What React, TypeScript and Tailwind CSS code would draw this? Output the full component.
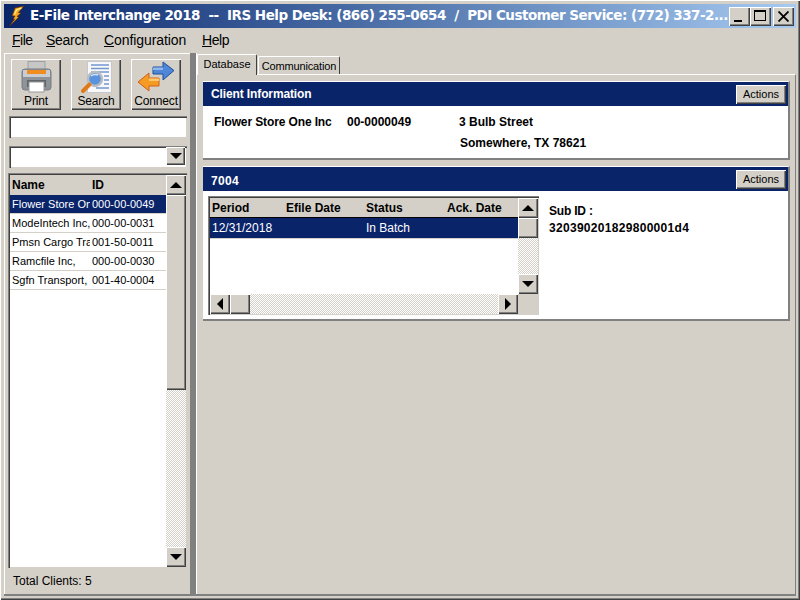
const raised = "bg-[#d4d0c8] shadow-[inset_1px_1px_0_#ffffff,inset_-1px_-1px_0_#404040,inset_-2px_-2px_0_#808080]";
const stipple = "bg-[repeating-conic-gradient(#d4d0c8_0_25%,#ffffff_0_50%)] bg-[length:2px_2px]";
const sunken = "shadow-[inset_1px_1px_0_#808080,inset_2px_2px_0_#404040,inset_-1px_-1px_0_#d4d0c8]";

function Arrow({ dir }: { dir: "up" | "down" | "left" | "right" }) {
  const pts = { up: "0,6 12,6 6,0", down: "0,0 12,0 6,6", left: "6,0 6,12 0,6", right: "0,0 0,12 6,6" }[dir];
  const v = dir === "up" || dir === "down";
  return (
    <svg width={v ? 12 : 6} height={v ? 6 : 12} viewBox={v ? "0 0 12 6" : "0 0 6 12"}>
      <polygon points={pts} fill="#000" />
    </svg>
  );
}

function SB({ dir, cls = "" }: { dir: "up" | "down" | "left" | "right"; cls?: string }) {
  return <div className={`${raised} flex shrink-0 items-center justify-center ${cls}`}><Arrow dir={dir} /></div>;
}

function PrintIcon() {
  return (
    <svg width="32" height="32" viewBox="0 0 32 32">
      <rect x="8" y="0.5" width="17" height="10" fill="#c6c6c6" stroke="#a0a0a0" />
      <path d="M2 11 Q2 8 5 8 H28 Q31 8 31 11 V26 Q31 29 28 29 H5 Q2 29 2 26Z" fill="#8d9399" stroke="#767c82" />
      <rect x="3" y="9" width="27" height="7" fill="#c9cdd1" />
      <rect x="7" y="9" width="19" height="4" fill="#f28c1e" />
      <rect x="7" y="19" width="19" height="7" fill="#5f656b" />
      <rect x="9" y="21" width="15" height="10" fill="#ffffff" stroke="#9a9a9a" />
    </svg>
  );
}

function SearchIcon() {
  return (
    <svg width="34" height="34" viewBox="0 0 34 34">
      <rect x="8.5" y="1.5" width="24" height="31" fill="#f8f8fa" stroke="#c8c8cc" />
      <path d="M12 5H30M12 8.5H30M12 12H30M25 16H30M25 20H30M25 24H30M17 28H30" stroke="#7398d0" strokeWidth="1.3" />
      <circle cx="16" cy="19" r="7" fill="#5b92dc" stroke="#b8bcc2" strokeWidth="2.5" />
      <path d="M12 16 Q15 13.5 19 15" stroke="#cfe2f8" strokeWidth="1.5" fill="none" />
      <path d="M10.5 24.5 L4 31" stroke="#e07a18" strokeWidth="4" strokeLinecap="round" />
    </svg>
  );
}

function ConnectIcon() {
  return (
    <svg width="38" height="32" viewBox="0 0 38 32">
      <path d="M16 6H26V1L37 9.5 26 19V13H16Z" fill="#4f86d8" stroke="#1f4f9c" />
      <path d="M16 6.5H26V9H16Z" fill="#8fb8ee" />
      <path d="M22 17H12V12L1 21 12 30V25H22Z" fill="#f59a22" stroke="#d0601a" />
      <path d="M22 17.5H12V20H22Z" fill="#fbc96c" />
    </svg>
  );
}

function Bolt() {
  return (
    <svg className="shrink-0" width="15" height="20" viewBox="0 0 15 20">
      <path d="M15 0 L6 2 L3 10 L6 10 L4 13 L5.5 13 L0.5 20 L10 11 L8 10.5 L12 7 L9.5 6.5 Z" fill="#f7a820" stroke="#5a2c06" strokeWidth="0.7" />
      <path d="M12.5 2 L7.5 4 L5.5 8.5" stroke="#fff09a" strokeWidth="1.2" fill="none" />
    </svg>
  );
}

function ToolBtn({ label, children }: { label: string; children: React.ReactNode }) {
  return (
    <div className={`${raised} flex h-[51px] w-[50px] flex-col items-center pt-[1px] text-[12px] leading-none`}>
      <div className="flex h-[34px] items-center justify-center">{children}</div>
      <div className="mt-[1px] tracking-[-0.15px]">{label}</div>
    </div>
  );
}

const clients = [
  ["Flower Store One Inc", "000-00-0049"],
  ["ModeIntech Inc,", "000-00-0031"],
  ["Pmsn Cargo Transport", "001-50-0011"],
  ["Ramcfile Inc,", "000-00-0030"],
  ["Sgfn Transport,", "001-40-0004"],
];

function Header({ title, titleCls = "mt-[4px] tracking-[-0.12px]" }: { title: string; titleCls?: string }) {
  return (
    <div className="flex h-[24px] shrink-0 items-start justify-between bg-[#0a246a] pl-[8px] pr-[2px]">
      <span className={`text-[12px] font-bold leading-[16px] text-white ${titleCls}`}>{title}</span>
      <div className={`${raised} mt-[3px] flex h-[19px] w-[50px] items-center justify-center text-[11px] text-black`}>Actions</div>
    </div>
  );
}

function Panel({ children, cls = "" }: { children: React.ReactNode; cls?: string }) {
  return <div className={`border-t border-r-2 border-b-2 border-t-white border-r-[#808080] border-b-[#808080] bg-white ${cls}`}>{children}</div>;
}

export default function App() {
  return (
    <div className="flex h-[600px] w-[800px] flex-col overflow-hidden bg-[#d4d0c8] font-['Liberation_Sans',Arial,sans-serif] text-black">
      <div className={`${raised} flex h-full flex-col p-[4px]`}>
        <div className="flex h-[24px] shrink-0 items-center justify-between bg-gradient-to-r from-[#0a246a] to-[#a6caf0] pl-[5px] pr-[2px]">
          <div className="flex min-w-0 items-center">
            <Bolt />
            <span className="ml-[6px] whitespace-pre font-['DejaVu_Sans',sans-serif] text-[13.5px] font-bold leading-none tracking-[-0.5px] text-white">
              E-File Interchange 2018{"  "}--{"  "}IRS Help Desk: (866) 255-0654{"  "}/{"  "}PDI Customer Service: (772) 337-2...
            </span>
          </div>
          <div className="flex shrink-0 items-center">
            <div className={`${raised} relative h-[19px] w-[21px]`}><div className="absolute bottom-[4px] left-[5px] h-[2px] w-[8px] bg-black" /></div>
            <div className={`${raised} relative h-[19px] w-[21px]`}><div className="absolute left-[4px] top-[3px] h-[11px] w-[12px] border border-t-2 border-black" /></div>
            <div className={`${raised} ml-[2px] flex h-[19px] w-[21px] items-center justify-center`}>
              <svg width="11" height="11" viewBox="0 0 11 11"><path d="M0.5 0.5L10.5 10.5M10.5 0.5L0.5 10.5" stroke="#000" strokeWidth="1.8" /></svg>
            </div>
          </div>
        </div>

        <div className="flex h-[25px] shrink-0 items-center pl-[8px] text-[14px]">
          <span className="w-[34px] tracking-[-0.5px]"><u>F</u>ile</span>
          <span className="w-[58px] tracking-[-0.3px]"><u>S</u>earch</span>
          <span className="w-[98px] tracking-[-0.08px]"><u>C</u>onfiguration</span>
          <span className="tracking-[-0.4px]"><u>H</u>elp</span>
        </div>

        <div className="flex min-h-0 flex-1 border-b-2 border-[#808080]">
          <div className="flex w-[186px] shrink-0 flex-col border-l border-t border-white pl-[3px] pr-[2px]">
            <div className="mt-[5px] flex gap-[10px] pl-[3px]">
              <ToolBtn label="Print"><PrintIcon /></ToolBtn>
              <ToolBtn label="Search"><SearchIcon /></ToolBtn>
              <ToolBtn label="Connect"><ConnectIcon /></ToolBtn>
            </div>
            <div className={`mt-[6px] ml-[1px] h-[22px] w-[178px] bg-white ${sunken}`} />
            <div className={`mt-[8px] ml-[1px] flex h-[22px] w-[178px] justify-end bg-white pb-[3px] pr-[2px] pt-[1px] ${sunken}`}>
              <SB dir="down" cls="w-[19px]" />
            </div>
            <div className={`mt-[5px] flex h-[395px] w-[179px] bg-white p-[2px] pb-[1px] pr-[1px] ${sunken}`}>
              <div className="min-w-0 flex-1">
                <div className="flex h-[20px] items-center bg-[#d4d0c8] pl-[2px] text-[12px] font-bold">
                  <span className="w-[80px]">Name</span><span>ID</span>
                </div>
                {clients.map(([n, id], i) => (
                  <div key={id} className={`flex h-[19px] items-center border-b border-[#d4d0c8] pl-[2px] text-[11px] ${i === 0 ? "bg-[#0a246a] text-white" : ""}`}>
                    <span className="w-[78px] overflow-hidden whitespace-nowrap">{n}</span>
                    <span className="ml-[2px]">{id}</span>
                  </div>
                ))}
              </div>
              <div className="flex w-[20px] flex-col">
                <SB dir="up" cls="h-[20px]" />
                <div className={`${raised} h-[195px] shrink-0`} />
                <div className={`${stipple} flex-1`} />
                <SB dir="down" cls="h-[20px]" />
              </div>
            </div>
            <div className="ml-[5px] mt-[6px] text-[12px] leading-[14px]">Total Clients: 5</div>
          </div>

          <div className="w-[6px] shrink-0 bg-[#808080]" />

          <div className="flex min-w-0 flex-1 flex-col border-l border-white">
            <div className="mt-[1px] flex h-[20px] shrink-0 items-start text-[11px]">
              <div className="relative z-10 flex h-[21px] w-[60px] items-center justify-center rounded-t-[2px] border-l border-r border-t border-l-white border-t-white border-r-[#404040] bg-[#d4d0c8] pb-[1px]">Database</div>
              <div className="ml-[1px] mt-[2px] flex h-[18px] w-[82px] items-center justify-center rounded-t-[2px] border-l border-r border-t border-l-white border-t-white border-r-[#404040] pt-[1px] tracking-[-0.15px]">Communication</div>
            </div>
            <div className="flex flex-1 flex-col gap-[6px] border-r border-t border-r-[#808080] border-t-white pl-[6px] pr-[5px] pt-[6px]">
              <Panel cls="h-[79px]">
                <Header title="Client Information" />
                <div className="grid grid-cols-[133px_112px_1fr] pl-[11px] pt-[6px] text-[12px] font-bold leading-[21px]">
                  <span className="tracking-[-0.12px]">Flower Store One Inc</span>
                  <span>00-0000049</span>
                  <span>3 Bulb Street</span>
                  <span />
                  <span />
                  <span className="ml-[1px]">Somewhere, TX 78621</span>
                </div>
              </Panel>
              <Panel cls="flex h-[155px] flex-col">
                <Header title="7004" titleCls="mt-[6px] tracking-[0.3px]" />
                <div className="flex flex-1 pl-[5px] pt-[5px]">
                  <div className={`relative h-[119px] w-[331px] bg-white p-[2px] pr-0 pb-0 ${sunken}`}>
                    <div className="flex h-[96px] w-[310px] flex-col">
                      <div className="grid h-[20px] shrink-0 grid-cols-[74px_80px_81px_1fr] items-center border-b border-black bg-[#d4d0c8] pl-[2px] text-[12px] font-bold">
                        <span>Period</span><span>Efile Date</span><span>Status</span><span>Ack. Date</span>
                      </div>
                      <div className="grid h-[21px] shrink-0 grid-cols-[154px_1fr] items-center border-b border-[#d4d0c8] bg-[#0a246a] pl-[2px] text-[12px] text-white">
                        <span>12/31/2018</span><span>In Batch</span>
                      </div>
                    </div>
                    <div className="absolute bottom-0 right-0 h-[21px] w-[21px] bg-[#d4d0c8]" />
                    <div className="absolute right-[1px] top-[2px] flex h-[96px] w-[20px] flex-col">
                      <SB dir="up" cls="h-[20px]" />
                      <div className={`${raised} h-[20px] shrink-0`} />
                      <div className={`${stipple} flex-1`} />
                      <SB dir="down" cls="h-[20px]" />
                    </div>
                    <div className="absolute bottom-[1px] left-[2px] flex h-[20px] w-[308px]">
                      <SB dir="left" cls="w-[20px]" />
                      <div className={`${raised} w-[20px] shrink-0`} />
                      <div className={`${stipple} flex-1`} />
                      <SB dir="right" cls="w-[20px]" />
                    </div>
                  </div>
                  <div className="ml-[10px] pt-[7px] text-[12px] font-bold leading-[17px]">
                    <div className="tracking-[-0.2px]">Sub ID :</div>
                    <div className="tracking-[0.3px]">320390201829800001d4</div>
                  </div>
                </div>
              </Panel>
            </div>
          </div>
        </div>
      </div>
    </div>
  );
}
